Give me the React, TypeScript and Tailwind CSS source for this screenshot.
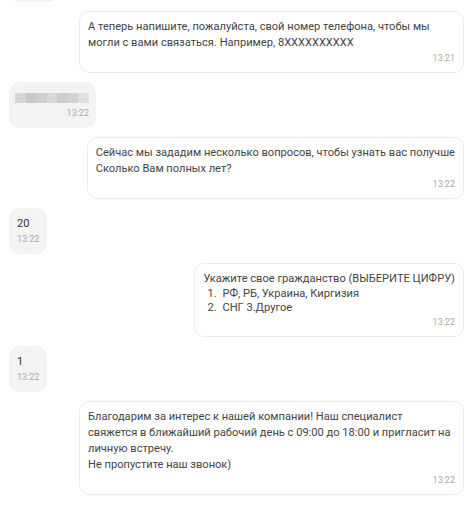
import React from "react";

const font = { fontFamily: "Roboto, 'Noto Sans', Arial, sans-serif" };

function Time({ t }: { t: string }) {
  return (
    <div className="text-right text-[9px] leading-[14px] text-[#a9a9a9]">{t}</div>
  );
}

function Out({ children, t }: { children: React.ReactNode; t: string }) {
  return (
    <div className="flex justify-end">
      <div className="max-w-[385px] rounded-[10px] border border-[#ececec] bg-white px-[8px] py-[7px]">
        <div className="text-[11.1px] leading-[16px] text-[#444]">{children}</div>
        <Time t={t} />
      </div>
    </div>
  );
}

function In({ children, t, cls = "px-[8px]" }: { children: React.ReactNode; t: string; cls?: string }) {
  return (
    <div className="flex justify-start">
      <div className={"rounded-[10px] bg-[#f3f3f3] py-[8px] " + cls}>
        <div className="text-[11.1px] leading-[16px] text-[#333]">{children}</div>
        <Time t={t} />
      </div>
    </div>
  );
}

function Blur() {
  const c = ["#d6d6d6", "#c9c9c9", "#cfcfcf", "#d9d9d9", "#cdcdcd", "#d3d3d3", "#e0e0e0"];
  return (
    <div className="flex h-[16px] items-center">
      <div className="flex h-[10px] w-[74px]">
        {c.map((x, i) => (
          <div key={i} className="h-full flex-1" style={{ background: x }} />
        ))}
      </div>
    </div>
  );
}

export default function App() {
  return (
    <div className="h-[507px] w-[468px] overflow-hidden bg-white" style={font}>
      <div className="flex flex-col gap-[9px] pl-[9px] pr-[4px]">
        <div className="-mt-[44px] flex">
          <div className="h-[46px] w-[49px] rounded-[10px] bg-[#f3f3f3]" />
        </div>
        <Out t="13:21">
          А теперь напишите, пожалуйста, свой номер телефона, чтобы мы могли с вами связаться. Например, 8XXXXXXXXXX
        </Out>
        <In t="13:22" cls="pl-[6px] pr-[7px]">
          <Blur />
        </In>
        <Out t="13:22">
          Сейчас мы зададим несколько вопросов, чтобы узнать вас получше
          <br />
          Сколько Вам полных лет?
        </Out>
        <In t="13:22">20</In>
        <Out t="13:22">
          <div>Укажите свое гражданство (ВЫБЕРИТЕ ЦИФРУ)</div>
          <div className="pl-[4px] leading-[14px]">
            <div className="flex">
              <span className="w-[15px]">1.</span>
              <span>РФ, РБ, Украина, Киргизия</span>
            </div>
            <div className="flex">
              <span className="w-[15px]">2.</span>
              <span>СНГ 3.Другое</span>
            </div>
          </div>
        </Out>
        <In t="13:22">1</In>
        <Out t="13:22">
          Благодарим за интерес к нашей компании! Наш специалист
          <br />
          свяжется в ближайший рабочий день с 09:00 до 18:00 и пригласит на личную встречу.
          <br />
          Не пропустите наш звонок)
        </Out>
      </div>
    </div>
  );
}
